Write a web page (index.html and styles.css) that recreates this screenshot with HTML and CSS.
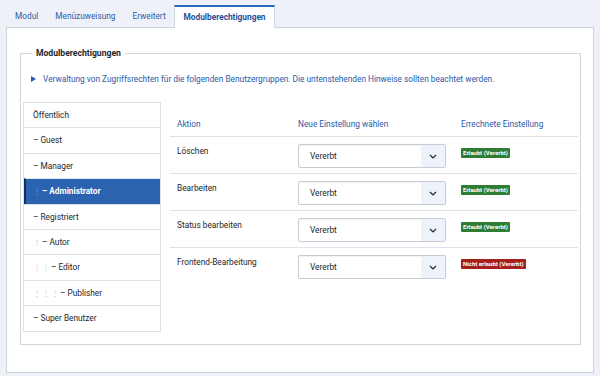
FILE: index.html
```html
<!DOCTYPE html>
<html lang="de">
<head>
    <meta charset="UTF-8">
    <meta name="viewport" content="width=device-width, initial-scale=1.0">
    <title>Modulberechtigungen</title>
    <link rel="stylesheet" href="styles.css">
</head>
<body>
    <div class="tabs">
        <span class="tab">Modul</span>
        <span class="tab">Menüzuweisung</span>
        <span class="tab">Erweitert</span>
        <span class="tab active">Modulberechtigungen</span>
    </div>

    <div class="panel">
        <fieldset class="rules">
            <legend>Modulberechtigungen</legend>

            <div class="notes">
                <svg class="caret" width="5" height="6" viewBox="0 0 5 6"><path d="M0 0 L5 3 L0 6 Z" fill="#2a5aa8"/></svg>
                Verwaltung von Zugriffsrechten für die folgenden Benutzergruppen. Die untenstehenden Hinweise sollten beachtet werden.
            </div>

            <div class="rules-body">
                <ul class="groups">
                    <li>Öffentlich</li>
                    <li><span class="dash">–</span>Guest</li>
                    <li><span class="dash">–</span>Manager</li>
                    <li class="active"><span class="lvl">⋮</span><span class="dash">–</span>Administrator</li>
                    <li><span class="dash">–</span>Registriert</li>
                    <li><span class="lvl">⋮</span><span class="dash">–</span>Autor</li>
                    <li><span class="lvl">⋮</span><span class="lvl">⋮</span><span class="dash">–</span>Editor</li>
                    <li><span class="lvl">⋮</span><span class="lvl">⋮</span><span class="lvl">⋮</span><span class="dash">–</span>Publisher</li>
                    <li><span class="dash">–</span>Super Benutzer</li>
                </ul>

                <table class="actions">
                    <thead>
                        <tr>
                            <th class="col-action">Aktion</th>
                            <th class="col-select">Neue Einstellung wählen</th>
                            <th class="col-calc">Errechnete Einstellung</th>
                        </tr>
                    </thead>
                    <tbody>
                        <tr>
                            <td>Löschen</td>
                            <td><div class="select"><span>Vererbt</span><span class="chev"><svg width="8" height="5" viewBox="0 0 8 5"><path d="M1 1 L4 4 L7 1" fill="none" stroke="#22262a" stroke-width="1.2"/></svg></span></div></td>
                            <td><span class="badge ok">Erlaubt (Vererbt)</span></td>
                        </tr>
                        <tr>
                            <td>Bearbeiten</td>
                            <td><div class="select"><span>Vererbt</span><span class="chev"><svg width="8" height="5" viewBox="0 0 8 5"><path d="M1 1 L4 4 L7 1" fill="none" stroke="#22262a" stroke-width="1.2"/></svg></span></div></td>
                            <td><span class="badge ok">Erlaubt (Vererbt)</span></td>
                        </tr>
                        <tr>
                            <td>Status bearbeiten</td>
                            <td><div class="select"><span>Vererbt</span><span class="chev"><svg width="8" height="5" viewBox="0 0 8 5"><path d="M1 1 L4 4 L7 1" fill="none" stroke="#22262a" stroke-width="1.2"/></svg></span></div></td>
                            <td><span class="badge ok">Erlaubt (Vererbt)</span></td>
                        </tr>
                        <tr>
                            <td>Frontend-Bearbeitung</td>
                            <td><div class="select"><span>Vererbt</span><span class="chev"><svg width="8" height="5" viewBox="0 0 8 5"><path d="M1 1 L4 4 L7 1" fill="none" stroke="#22262a" stroke-width="1.2"/></svg></span></div></td>
                            <td><span class="badge no">Nicht erlaubt (Vererbt)</span></td>
                        </tr>
                    </tbody>
                </table>
            </div>
        </fieldset>
    </div>
</body>
</html>
```

FILE: styles.css
```css
body {
    margin: 0;
    font-family: Roboto, "Liberation Sans", sans-serif;
    font-size: 8.3px;
    color: #22262a;
    background-color: #eef2f8;
}
.tabs {
    display: flex;
    align-items: flex-end;
    padding: 5px 0 0 6.5px;
    height: 22px;
    position: relative;
    z-index: 1;
}
.tab {
    display: block;
    padding: 0 8.5px;
    line-height: 22px;
    color: #2a5aa8;
}
.tab.active {
    background: white;
    border: 1px solid #cdd5df;
    border-top: 2px solid #2a69b8;
    border-bottom: none;
    padding: 0 8px 0 8.5px;
    line-height: 20px;
    height: 21px;
    font-weight: bold;
    color: #1f4f9c;
    margin-bottom: -1px;
}
.panel {
    margin: 0 6px 0 6px;
    background: white;
    border: 1px solid #cdd5df;
    padding: 20px 12px 27px 13px;
}
.rules {
    margin: 0;
    border: 1px solid #cdd5df;
    padding: 0 2px 12px 2px;
}
.rules legend {
    margin-left: 9px;
    padding: 0 4px;
    font-weight: bold;
    font-size: 8.6px;
    color: #22262a;
}
.notes {
    padding: 16px 10px 0 8px;
    height: 23px;
    color: #2a5aa8;
}
.caret {
    margin-right: 5px;
    vertical-align: 0;
}
.rules-body {
    display: grid;
    grid-template-columns: 138px 1fr;
    column-gap: 9px;
    margin-top: 5px;
}
.groups {
    list-style: none;
    margin: 0;
    padding: 0;
    border: 1px solid #dfe3e8;
}
.groups li {
    height: 24.4px;
    line-height: 24.4px;
    padding-left: 9px;
    border-top: 1px solid #dfe3e8;
    white-space: nowrap;
}
.groups li:first-child {
    border-top: none;
}
.groups li.active {
    background: #2c63b0;
    color: white;
    font-weight: bold;
    border-left: 2px solid #12305a;
    padding-left: 7px;
}
.lvl {
    display: inline-block;
    width: 9px;
    color: #b5bcc6;
}
.groups li.active .lvl {
    color: #5d84c2;
}
.dash {
    margin-right: 2px;
}
.actions {
    width: 408px;
    border-collapse: collapse;
    align-self: start;
}
.actions th {
    height: 27px;
    vertical-align: bottom;
    padding: 0 7px 7px 7px;
    text-align: left;
    font-weight: normal;
    color: #2a5aa8;
    border-bottom: 1px solid #dfe3e8;
}
.col-action {
    width: 107px;
}
.col-select {
    width: 149px;
}
.actions td {
    padding: 7px 7px 5px 7px;
    vertical-align: top;
    border-bottom: 1px solid #dfe3e8;
}
.actions tr:last-child td {
    border-bottom: none;
}
.actions td:first-child {
    padding-top: 9px;
}
.actions td:last-child {
    padding-top: 10px;
}
.select {
    display: flex;
    justify-content: space-between;
    width: 146px;
    height: 22px;
    border: 1px solid #c5ccd6;
    border-radius: 2px;
    box-shadow: inset 0 1px 1px rgba(0,0,0,0.05);
}
.select span {
    line-height: 22px;
    padding-left: 11px;
}
.select .chev {
    width: 24px;
    padding: 0;
    background: #eef3fb;
    display: flex;
    align-items: center;
    justify-content: center;
}
.badge {
    display: inline-block;
    font-size: 6px;
    font-weight: bold;
    color: white;
    padding: 1px 2px;
    line-height: 8px;
    border-radius: 1px;
}
.badge.ok {
    background: #2e7d32;
}
.badge.no {
    background: #a5201a;
}
```
